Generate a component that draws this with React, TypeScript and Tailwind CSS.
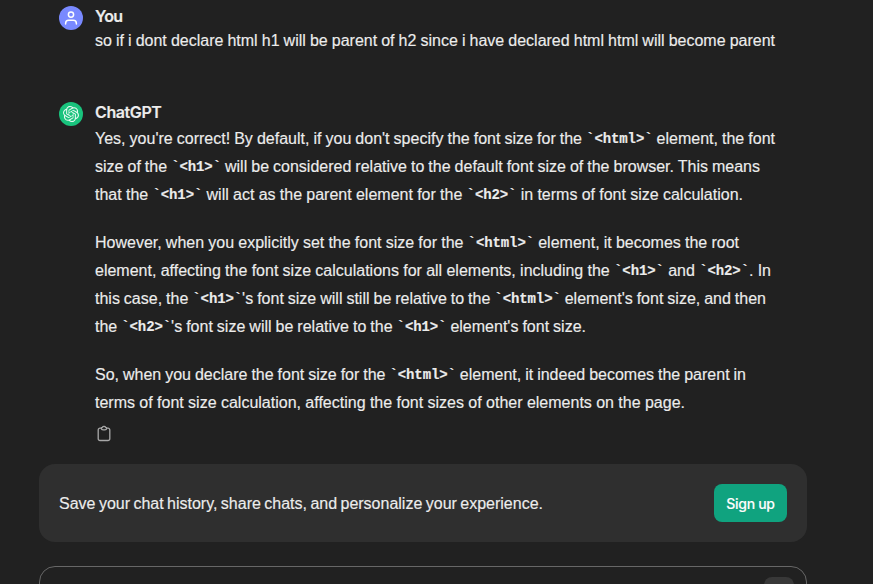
import type { ReactNode } from "react";
import { SiOpenai } from "react-icons/si";

function Code({ children }: { children: string }) {
  return (
    <code className="align-[1px] font-['Liberation_Mono',monospace] text-[14px] leading-none font-bold tracking-[-0.1px]">
      {"`" + children + "`"}
    </code>
  );
}

function Line({ width, children }: { width: string; children: ReactNode }) {
  return (
    <div className={`h-7 whitespace-nowrap pt-px leading-7 [text-align-last:justify] ${width}`}>{children}</div>
  );
}

function Turn({ avatar, name, nameClass, children }: { avatar: ReactNode; name: string; nameClass: string; children: ReactNode }) {
  return (
    <div className="flex items-start gap-3">
      <div className="mt-1 shrink-0">{avatar}</div>
      <div>
        <div className={`h-6 font-['Inter',sans-serif] font-semibold leading-7 whitespace-nowrap ${nameClass}`}>{name}</div>
        {children}
      </div>
    </div>
  );
}

export default function App() {
  return (
    <div className="h-[584px] w-[873px] overflow-hidden bg-[#212121] font-['Liberation_Sans',sans-serif] text-base tracking-[0px] text-[#ececec] [word-spacing:-2px] [-webkit-text-stroke:0.15px_#ececec]">
      <div className="flex flex-col gap-[44px] pt-0.5 pl-[59px]">
        <Turn
          name="You"
          nameClass="tracking-[-0.7px]"
          avatar={
            <div className="flex size-6 items-center justify-center rounded-full bg-[#7989ff]">
              <svg width="16" height="16" viewBox="0 0 16 16" fill="none" stroke="#fff" strokeWidth="1.5" strokeLinecap="round">
                <circle cx="8" cy="4.6" r="2.6" />
                <path d="M2.6 14v-.6c0-1.9 1.3-3.1 3.1-3.1h4.6c1.8 0 3.1 1.2 3.1 3.1v.6" />
              </svg>
            </div>
          }
        >
          <Line width="w-[680px]">so if i dont declare html h1 will be parent of h2 since i have declared html html will become parent</Line>
        </Turn>
        <Turn
          name="ChatGPT"
          nameClass="tracking-[-0.4px]"
          avatar={
            <div className="flex size-6 items-center justify-center rounded-full bg-[#19c37d] text-white/90">
              <SiOpenai size={16} strokeWidth={0} />
            </div>
          }
        >
          <div className="mt-0.5 flex flex-col gap-5">
            <div>
              <Line width="w-[680px]">Yes, you're correct! By default, if you don't specify the font size for the <Code>{"<html>"}</Code> element, the font</Line>
              <Line width="w-[665px]">size of the <Code>{"<h1>"}</Code> will be considered relative to the default font size of the browser. This means</Line>
              <Line width="w-[648px]">that the <Code>{"<h1>"}</Code> will act as the parent element for the <Code>{"<h2>"}</Code> in terms of font size calculation.</Line>
            </div>
            <div>
              <Line width="w-[644px]">However, when you explicitly set the font size for the <Code>{"<html>"}</Code> element, it becomes the root</Line>
              <Line width="w-[676px]">element, affecting the font size calculations for all elements, including the <Code>{"<h1>"}</Code> and <Code>{"<h2>"}</Code>. In</Line>
              <Line width="w-[671px]">this case, the <Code>{"<h1>"}</Code>'s font size will still be relative to the <Code>{"<html>"}</Code> element's font size, and then</Line>
              <Line width="w-[491px]">the <Code>{"<h2>"}</Code>'s font size will be relative to the <Code>{"<h1>"}</Code> element's font size.</Line>
            </div>
            <div>
              <Line width="w-[651px]">So, when you declare the font size for the <Code>{"<html>"}</Code> element, it indeed becomes the parent in</Line>
              <Line width="w-[590px]">terms of font size calculation, affecting the font sizes of other elements on the page.</Line>
            </div>
          </div>
          <svg className="mt-[9px] ml-px block" width="16" height="18" viewBox="0 0 16 18" fill="none" stroke="#a8a8a8" strokeWidth="1.3" strokeLinejoin="round">
            <path d="M5.4 3.2H4a1.8 1.8 0 0 0-1.8 1.8v8.7A1.8 1.8 0 0 0 4 15.500h8a1.800 1.800 0 0 0 1.800-1.800V5A1.800 1.800 0 0 0 12 3.200h-1.400" />
            <path d="M5.400 3.200c0-.5.4-.8.9-.8.3-.7.9-1 1.700-1s1.400.3 1.700 1c.5 0 .9.3.9.8 0 1-.7 1.700-1.700 1.700H7.100c-1 0-1.700-.7-1.700-1.700z" />
          </svg>
        </Turn>
      </div>
      <div className="mt-[21px] ml-[39px] flex h-[78px] w-[768px] items-center justify-between rounded-2xl bg-[#2f2f2f] px-5">
        <div className="w-[484px] whitespace-nowrap pt-px [text-align-last:justify]">Save your chat history, share chats, and personalize your experience.</div>
        <button className="h-[38px] w-[73px] rounded-lg bg-[#10a37f] pt-px font-['Inter',sans-serif] text-sm font-medium tracking-[-0.3px] text-white [word-spacing:0px]">Sign up</button>
      </div>
      <div className="mt-6 ml-[39px] flex h-[52px] w-[768px] justify-end rounded-2xl border border-[#676767] pt-[10px] pr-3">
        <div className="size-[30px] rounded-lg bg-[#383838]" />
      </div>
    </div>
  );
}
